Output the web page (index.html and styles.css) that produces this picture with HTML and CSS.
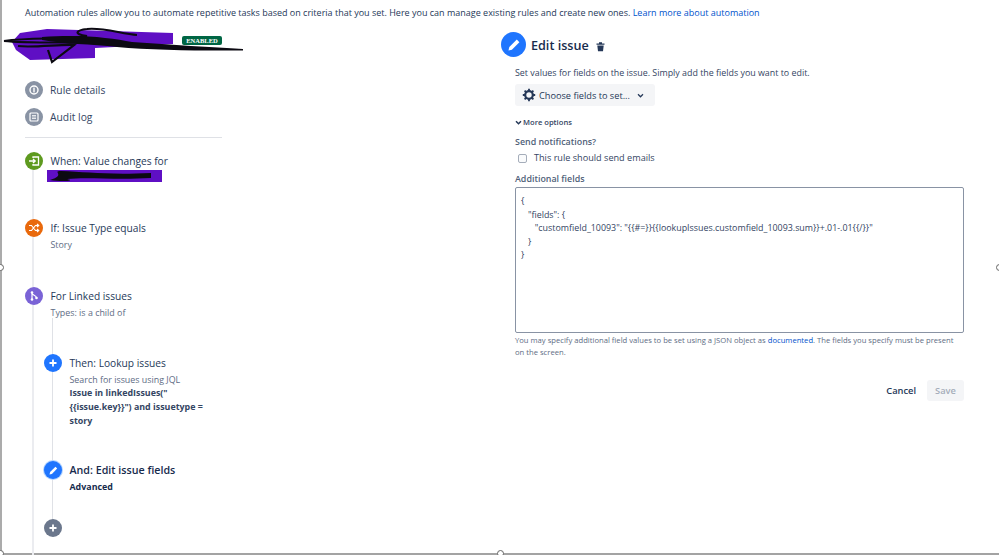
FILE: index.html
```html
<!DOCTYPE html>
<html lang="en">
<head>
<meta charset="utf-8">
<title>Automation rule</title>
<link rel="stylesheet" href="styles.css">
</head>
<body>
<div class="frame">
  <p class="intro">Automation rules allow you to automate repetitive tasks based on criteria that you set. Here you can manage existing rules and create new ones. <a href="#">Learn more about automation</a></p>
  <div class="columns">
    <section class="left">
      <div class="rule-head">
        <svg class="scribble" width="250" height="40" viewBox="0 0 250 40">
          <path d="M18 7 L45 3 L171 7 L171 18 L93 22 L93 32 L28 34 L14 24 L10 16 Z" fill="#5f0fc4"/>
          <path d="M2 15 C30 11 60 14 85 10 C70 8 75 4 85 3 C100 1 120 8 135 9 M2 15 C30 18 80 15 120 18 M16 20 C30 22 60 18 72 19 L50 36 L46 24" fill="none" stroke="#0c0a12" stroke-width="2.200"/>
          <path d="M40 11 C80 8 110 12 130 16 C170 19 210 21 241 23 L241 24.500 C200 25 150 24 115 21 C90 18 60 18 40 14 Z" fill="#0c0a12"/>
        </svg>
        <span class="badge">ENABLED</span>
      </div>
      <nav class="menu">
        <div class="menu-row">
          <span class="dot grey"><svg width="10" height="10" viewBox="0 0 10 10"><circle cx="5" cy="5" r="4" fill="none" stroke="#fff" stroke-width="1.400"/><rect x="4.300" y="2.600" width="1.400" height="4.800" fill="#fff"/></svg></span>
          <span>Rule details</span>
        </div>
        <div class="menu-row">
          <span class="dot grey"><svg width="10" height="10" viewBox="0 0 10 10"><rect x="1" y="1" width="8" height="8" rx="1" fill="none" stroke="#fff" stroke-width="1.200"/><path d="M3 3.500h4M3 5h4M3 6.500h4" stroke="#fff" stroke-width=".8"/></svg></span>
          <span>Audit log</span>
        </div>
      </nav>
      <hr class="rule">
      <div class="timeline">
        <div class="step when">
          <span class="dot green"><svg width="12" height="12" viewBox="0 0 12 12"><path d="M5 3V2h5.500v8H5V9M1 6h6M5 4l2.200 2L5 8" fill="none" stroke="#fff" stroke-width="1.300"/></svg></span>
          <div class="step-body">
            <div class="step-title">When: Value changes for</div>
            <svg class="scribble-small" width="115" height="12" viewBox="0 0 115 12"><rect x="0" y="0" width="115" height="12" fill="#5f0fc4"/><path d="M3 10 C20 5 4 1 14 1 C40 2 60 5 104 3 L104 8 C70 10 40 7 20 9 C30 11 14 12 3 10 Z" fill="#0c0a12"/></svg>
          </div>
        </div>
        <div class="step if">
          <span class="dot orange"><svg width="12" height="12" viewBox="0 0 12 12"><path d="M1 3.500h2.500l4 5H10M1 8.500h2.500l4-5H10M9 2l1.700 1.500L9 5M9 7l1.700 1.500L9 10" fill="none" stroke="#fff" stroke-width="1.200"/></svg></span>
          <div class="step-body">
            <div class="step-title">If: Issue Type equals</div>
            <div class="step-sub">Story</div>
          </div>
        </div>
        <div class="step branch">
          <span class="dot purple"><svg width="12" height="12" viewBox="0 0 12 12"><path d="M4 2v8M4 3c0 2.500 4.500 2 4.500 5" fill="none" stroke="#fff" stroke-width="1.200"/><circle cx="4" cy="2.500" r="1.300" fill="#fff"/><circle cx="4" cy="9.500" r="1.300" fill="#fff"/><circle cx="8.500" cy="8" r="1.300" fill="#fff"/></svg></span>
          <div class="step-body">
            <div class="step-title">For Linked issues</div>
            <div class="step-sub">Types: is a child of</div>
          </div>
        </div>
        <div class="nested">
          <div class="step then">
            <span class="dot blue"><svg width="10" height="10" viewBox="0 0 10 10"><path d="M5 1.500v7M1.500 5h7" stroke="#fff" stroke-width="1.800"/></svg></span>
            <div class="step-body">
              <div class="step-title">Then: Lookup issues</div>
              <div class="step-sub">Search for issues using JQL</div>
              <div class="jql">Issue in linkedIssues("<br>{{issue.key}}") and issuetype =<br>story</div>
            </div>
          </div>
          <div class="step and">
            <span class="dot blue selected"><svg width="11" height="11" viewBox="0 0 11 11"><path d="M1.500 9.500l.6-2.400L7.500 1.800l1.700 1.700L3.900 8.900z" fill="#fff"/></svg></span>
            <div class="step-body">
              <div class="step-title strong">And: Edit issue fields</div>
              <div class="jql advanced">Advanced</div>
            </div>
          </div>
          <div class="step add">
            <span class="dot slate"><svg width="10" height="10" viewBox="0 0 10 10"><path d="M5 1.500v7M1.500 5h7" stroke="#fff" stroke-width="1.800"/></svg></span>
          </div>
        </div>
      </div>
    </section>
    <section class="right">
      <header class="panel-head">
        <span class="dot blue big"><svg width="16" height="16" viewBox="0 0 16 16"><path d="M2.500 13.500l.8-3.400L10.800 2.600l2.600 2.600-7.500 7.500z" fill="#fff"/></svg></span>
        <h1>Edit issue</h1>
        <svg class="trash" width="11" height="11" viewBox="0 0 11 11"><path d="M1.500 2.500h8v1.200h-8zM4 1.200h3v1.300H4zM2.300 4.400h6.400L8 10.300H3z" fill="#253858"/></svg>
      </header>
      <div class="panel-body">
        <p class="desc">Set values for fields on the issue. Simply add the fields you want to edit.</p>
        <button class="choose" type="button">
          <svg width="14" height="14" viewBox="0 0 14 14"><circle cx="7" cy="7" r="3.800" fill="none" stroke="#253858" stroke-width="2.200"/><path d="M7 .8v2.400M7 10.800v2.400M.8 7h2.400M10.800 7h2.400M2.600 2.600l1.700 1.700M9.700 9.700l1.700 1.700M11.400 2.600L9.700 4.300M4.300 9.700l-1.700 1.700" stroke="#253858" stroke-width="1.800"/></svg>
          <span>Choose fields to set...</span>
          <svg class="chev" width="7" height="5" viewBox="0 0 8 6"><path d="M1 1.500l3 3 3-3" fill="none" stroke="#253858" stroke-width="1.500"/></svg>
        </button>
        <div class="more"><svg width="7" height="5" viewBox="0 0 8 6"><path d="M1 1.500l3 3 3-3" fill="none" stroke="#253858" stroke-width="1.800"/></svg>More options</div>
        <div class="label">Send notifications?</div>
        <label class="check"><span class="box"></span>This rule should send emails</label>
        <div class="label additional">Additional fields</div>
        <div class="json">{
   "fields": {
      "customfield_10093": "{{#=}}{{lookupIssues.customfield_10093.sum}}+.01-.01{{/}}"
   }
}</div>
        <p class="help">You may specify additional field values to be set using a JSON object as <a href="#">documented</a>. The fields you specify must be present on the screen.</p>
        <div class="actions">
          <button class="cancel" type="button">Cancel</button>
          <button class="save" type="button">Save</button>
        </div>
      </div>
    </section>
  </div>
  <span class="handle h-left"></span>
  <span class="handle h-right"></span>
  <span class="handle h-bottom"></span>
  <span class="handle h-corner"></span>
</div>
</body>
</html>
```
FILE: styles.css
```css
* { box-sizing: border-box; }
html, body { margin: 0; height: 100%; overflow: hidden; background: #fff; }
body { font-family: "Open Sans", "Noto Sans", sans-serif; color: #172b4d; }
a { color: #0052cc; text-decoration: none; }
.frame {
  position: relative;
  width: 999px;
  height: 555px;
  border-left: 2px solid #ababab;
  border-bottom: 2px solid #a3a3a3;
}
.intro { margin: 0; padding: 7px 0 0 23px; font-size: 9px; line-height: 12px; color: #253858; white-space: nowrap; }
.columns { display: flex; }
.left { width: 499px; flex: none; padding-left: 23px; }
.rule-head { position: relative; height: 62px; }
.scribble { position: absolute; left: -23px; top: 7px; }
.badge {
  position: absolute;
  left: 157px;
  top: 17px;
  background: #006644;
  color: #fff;
  font-size: 6.500px;
  line-height: 9px;
  font-weight: 700;
  padding: 0 2px;
  border-radius: 2px;
  width: 40px;
  text-align: center;
  white-space: nowrap;
  font-family: "Liberation Serif", serif;
}
.dot { display: flex; align-items: center; justify-content: center; flex: none; width: 18px; height: 18px; border-radius: 50%; position: relative; z-index: 1; }
.grey { background: #8993a4; }
.green { background: #5e9a1f; }
.orange { background: #e9690c; }
.purple { background: #7a63d6; }
.blue { background: #1f75fe; }
.slate { background: #6b778c; }
.selected { box-shadow: 0 0 0 1px #b3d4ff; }
.big { width: 25px; height: 25px; }
.menu { display: flex; flex-direction: column; gap: 9px; font-size: 10.300px; color: #344563; }
.menu-row { display: flex; align-items: center; gap: 7px; height: 18px; }
.rule { margin: 11px 0 0; width: 197px; border: 0; border-top: 1px solid #dfe1e6; }
.timeline { position: relative; padding-top: 14px; }
.timeline::before { content: ""; position: absolute; left: 7px; top: 20px; width: 2px; height: 420px; background: #ebecf0; }
.step { display: flex; gap: 7.500px; align-items: flex-start; }
.step-body { padding-top: 2px; }
.step-title { font-size: 10.200px; line-height: 15px; color: #253858; white-space: nowrap; }
.step-title.strong { font-size: 10.700px; font-weight: 600; color: #172b4d; }
.step-sub { font-size: 8.900px; line-height: 13px; color: #5e6c84; margin-top: 2px; white-space: nowrap; }
.scribble-small { display: block; margin: 1px 0 0 -4px; }
.when { height: 67px; }
.if { height: 68px; }
.branch { height: 67px; }
.nested { position: relative; padding-left: 19px; }
.nested::before { content: ""; position: absolute; left: 27px; top: -36px; width: 1px; height: 202px; background: #dfe1e6; }
.then { height: 107px; }
.and { height: 58px; }
.jql { font-size: 8.900px; line-height: 14px; font-weight: 700; color: #344563; white-space: nowrap; }
.advanced { color: #172b4d; margin-top: 2px; }
.right { width: 462px; flex: none; padding-top: 13px; }
.panel-head { display: flex; align-items: center; height: 25px; }
.panel-head h1 { margin: 2px 0 0 5px; font-size: 12.600px; font-weight: 600; color: #172b4d; }
.trash { margin: 3px 0 0 6px; }
.panel-body { padding-left: 14px; }
.desc { margin: 10px 0 0; font-size: 8.900px; line-height: 12px; color: #344563; white-space: nowrap; }
.choose {
  display: flex;
  align-items: center;
  gap: 3px;
  margin-top: 5px;
  width: 140px;
  height: 22px;
  padding: 0 0 0 7px;
  border: 0;
  border-radius: 3px;
  background: #f4f5f7;
  font: inherit;
  font-size: 9.200px;
  color: #253858;
}
.chev { margin-left: 4px; }
.more { display: flex; align-items: center; gap: 1px; margin-top: 10px; font-size: 7.600px; line-height: 12px; color: #344563; font-weight: 600; }
.label { margin-top: 8px; font-size: 8.900px; line-height: 12px; color: #505f79; font-weight: 600; }
.check { display: flex; align-items: center; margin-top: 4px; padding-left: 3px; font-size: 9.150px; line-height: 12px; color: #344563; }
.box { width: 9px; height: 9px; margin-right: 7px; border: 1px solid #a5adba; border-radius: 2px; background: #fafbfc; }
.additional { margin-top: 9px; }
.json {
  margin-top: 2px;
  width: 449px;
  height: 146px;
  padding: 6px 5px;
  border: 1px solid #8993a4;
  border-radius: 2px;
  font-size: 8.900px;
  line-height: 13.500px;
  color: #344563;
  white-space: pre;
}
.help { margin: 2px 0 0; width: 449px; font-size: 7.650px; line-height: 11.500px; color: #5e6c84; }
.actions { display: flex; justify-content: flex-end; align-items: center; gap: 3px; width: 449px; margin-top: 22px; }
.actions button { height: 21px; border: 0; border-radius: 3px; font: inherit; font-size: 9.300px; font-weight: 600; padding: 0 8px; }
.cancel { background: transparent; color: #253858; }
.save { width: 37px; background: #f4f5f7; color: #a5adba; }
.handle { position: absolute; width: 7px; height: 7px; border: 1px solid #666; border-radius: 50%; background: #fff; }
.h-left { left: -5px; top: 264px; }
.h-right { right: -4px; top: 264px; }
.h-bottom { left: 495px; bottom: -4px; }
.h-corner { left: -5px; bottom: -4px; }
```
